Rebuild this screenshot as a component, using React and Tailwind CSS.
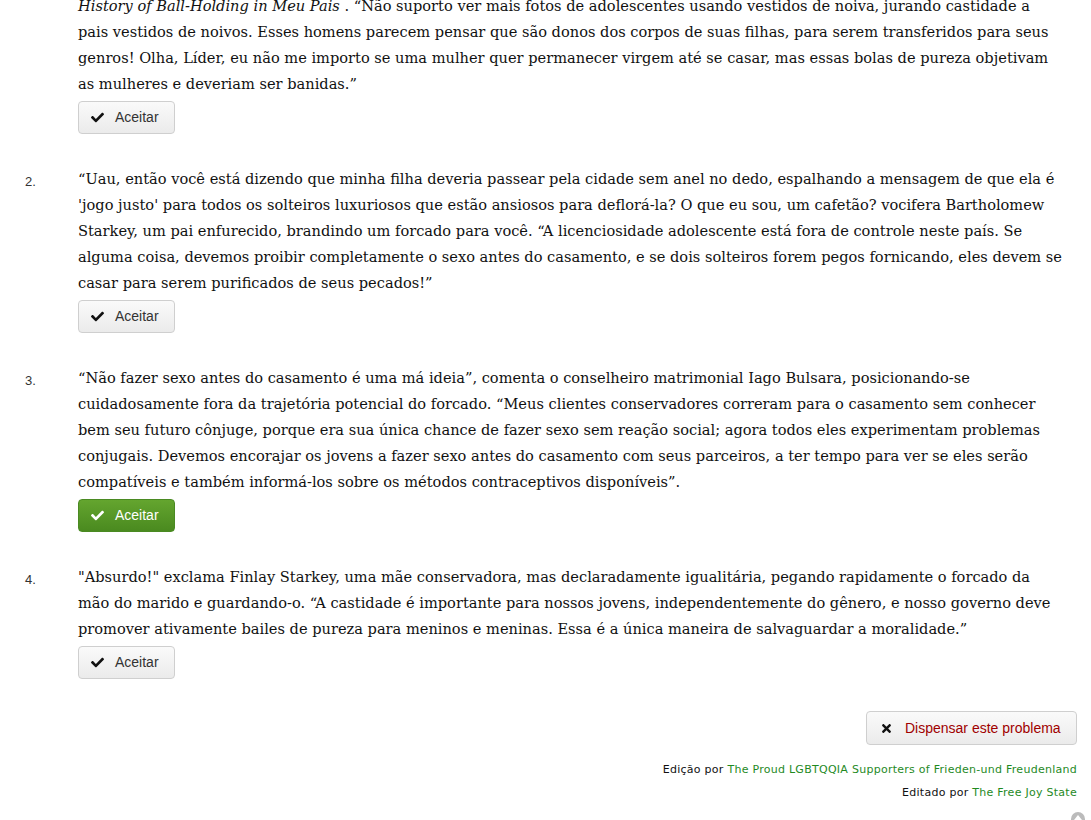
import React from 'react';
import { FaCheck, FaTimes } from 'react-icons/fa';

const items = [
  {
    n: 1,
    cont: true,
    body: (
      <>
        <i>History of Ball-Holding in Meu Pais</i> . “Não suporto ver mais fotos de adolescentes usando vestidos de noiva, jurando castidade a pais vestidos de noivos. Esses homens parecem pensar que são donos dos corpos de suas filhas, para serem transferidos para seus genros! Olha, Líder, eu não me importo se uma mulher quer permanecer virgem até se casar, mas essas bolas de pureza objetivam as mulheres e deveriam ser banidas.”
      </>
    ),
  },
  {
    n: 2,
    body: "“Uau, então você está dizendo que minha filha deveria passear pela cidade sem anel no dedo, espalhando a mensagem de que ela é 'jogo justo' para todos os solteiros luxuriosos que estão ansiosos para deflorá-la? O que eu sou, um cafetão? vocifera Bartholomew Starkey, um pai enfurecido, brandindo um forcado para você. “A licenciosidade adolescente está fora de controle neste país. Se alguma coisa, devemos proibir completamente o sexo antes do casamento, e se dois solteiros forem pegos fornicando, eles devem se casar para serem purificados de seus pecados!”",
  },
  {
    n: 3,
    chosen: true,
    body: "“Não fazer sexo antes do casamento é uma má ideia”, comenta o conselheiro matrimonial Iago Bulsara, posicionando-se cuidadosamente fora da trajetória potencial do forcado. “Meus clientes conservadores correram para o casamento sem conhecer bem seu futuro cônjuge, porque era sua única chance de fazer sexo sem reação social; agora todos eles experimentam problemas conjugais. Devemos encorajar os jovens a fazer sexo antes do casamento com seus parceiros, a ter tempo para ver se eles serão compatíveis e também informá-los sobre os métodos contraceptivos disponíveis”.",
  },
  {
    n: 4,
    body: "\"Absurdo!\" exclama Finlay Starkey, uma mãe conservadora, mas declaradamente igualitária, pegando rapidamente o forcado da mão do marido e guardando-o. “A castidade é importante para nossos jovens, independentemente do gênero, e nosso governo deve promover ativamente bailes de pureza para meninos e meninas. Essa é a única maneira de salvaguardar a moralidade.”",
  },
];

const AcceptButton = ({ chosen }) => (
  <button
    className={`mt-[4px] flex h-[33px] w-[97px] items-center gap-[11px] rounded-[4px] border pl-[12px] text-[14px] font-['Liberation_Sans',Arial,sans-serif] ${
      chosen
        ? 'border-[#4a8a22] bg-gradient-to-b from-[#64a52f] to-[#4a8a1f] text-white'
        : 'border-[#cfcfcf] bg-gradient-to-b from-[#fafafa] to-[#ebebeb] text-[#333]'
    }`}
  >
    <FaCheck size={13} className={chosen ? 'text-white' : 'text-[#111]'} />
    Aceitar
  </button>
);

export default function App() {
  return (
    <div className="relative h-[820px] w-[1091px] overflow-hidden bg-white">
      <ol className="mt-[-7px] flex flex-col gap-[32px] pr-[27px]">
        {items.map((it) => (
          <li key={it.n} className="flex">
            <div className="w-[78px] shrink-0 pl-[25px] pt-[6px] text-[13px] text-[#333] font-['Liberation_Sans',Arial,sans-serif]">
              {it.cont ? '' : `${it.n}.`}
            </div>
            <div className="flex-1">
              <p className="text-[14.6px] leading-[26px] text-[#111] font-['DejaVu_Serif',Georgia,serif]">
                {it.body}
              </p>
              <AcceptButton chosen={it.chosen} />
            </div>
          </li>
        ))}
      </ol>

      <div className="mt-[32px] flex flex-col items-end pr-[14px]">
        <button className="flex h-[34px] w-[211px] items-center gap-[12px] rounded-[4px] border border-[#cfcfcf] bg-gradient-to-b from-[#fafafa] to-[#ebebeb] pl-[13px] text-[14px] text-[#a00000] font-['Liberation_Sans',Arial,sans-serif]">
          <FaTimes size={13} className="text-[#111]" />
          Dispensar este problema
        </button>
        <div className="mt-[13px] text-right text-[11px] leading-[23px] tracking-[0.27px] text-[#111] font-['DejaVu_Sans',Verdana,sans-serif]">
          <div>
            Edição por <span className="text-[#1f8a1f]">The Proud LGBTQQIA Supporters of Frieden-und Freudenland</span>
          </div>
          <div>
            Editado por <span className="text-[#1f8a1f]">The Free Joy State</span>
          </div>
        </div>
      </div>

      <div className="absolute left-[1071px] top-[812px] flex h-[14px] w-[14px] items-start justify-center rounded-full bg-[#bbb]">
        <div className="mt-[3px] h-0 w-0 border-x-[4px] border-b-[5px] border-x-transparent border-b-white" />
      </div>
    </div>
  );
}
